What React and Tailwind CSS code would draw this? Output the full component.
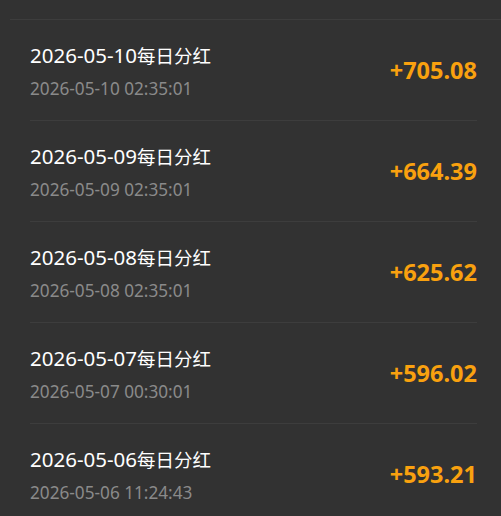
import React from 'react';

const records = [
    { date: '2026-05-10', time: '2026-05-10 02:35:01', amount: '+705.08' },
    { date: '2026-05-09', time: '2026-05-09 02:35:01', amount: '+664.39' },
    { date: '2026-05-08', time: '2026-05-08 02:35:01', amount: '+625.62' },
    { date: '2026-05-07', time: '2026-05-07 00:30:01', amount: '+596.02' },
    { date: '2026-05-06', time: '2026-05-06 11:24:43', amount: '+593.21' },
];

const App = () => {
    return (
        <div
            className="w-[501px] h-[516px] overflow-hidden bg-[#323232] pt-[19px]"
            style={{ fontFamily: '"Noto Sans", "Noto Sans CJK SC", sans-serif' }}
        >
            <div className="ml-[10px] border-t border-[#3d3d3d]">
                <div className="ml-[20px] mr-[24px]">
                    {records.map((r) => (
                        <div
                            key={r.time}
                            className="flex items-center justify-between h-[101px] border-b border-[#3d3d3d]"
                        >
                            <div className="flex flex-col pt-[2px]">
                                <span className="text-[20.5px] leading-[24px] text-white">
                                    {r.date}
                                    <span className="text-[18.5px]">每日分红</span>
                                </span>
                                <span className="mt-[11px] text-[17.2px] leading-[20px] text-[#8a8a8a]">{r.time}</span>
                            </div>
                            <span className="text-[23.5px] leading-[28px] font-bold text-[#f9a10f]">{r.amount}</span>
                        </div>
                    ))}
                </div>
            </div>
        </div>
    );
};

export default App;
